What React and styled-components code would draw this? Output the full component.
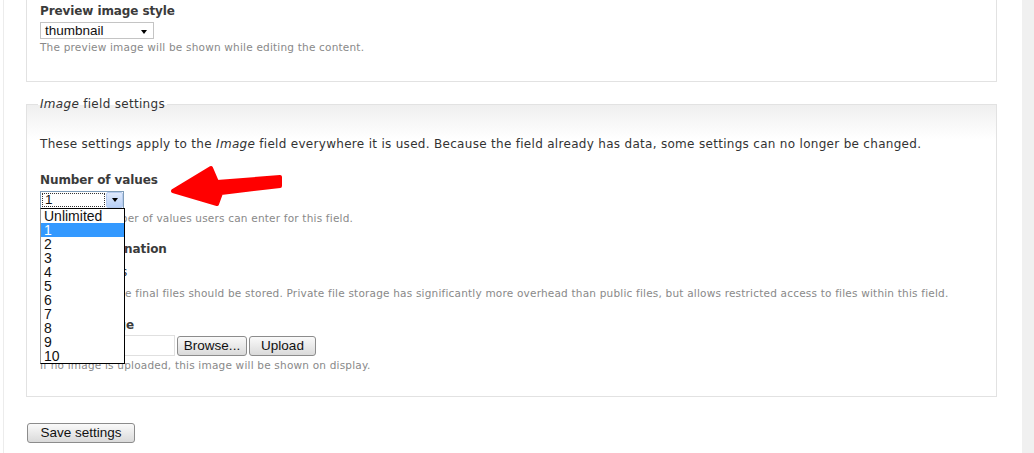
import React from 'react'
import styled, {createGlobalStyle} from 'styled-components'

const GlobalStyle = createGlobalStyle`
  html, body {
    margin: 0;
    padding: 0;
    background: #fff;
  }
  body {
    font-family: "DejaVu Sans", Verdana, sans-serif;
    font-size: 12px;
    letter-spacing: 0.3px;
    color: #333;
  }
`;

const options = ['Unlimited', '1', '2', '3', '4', '5', '6', '7', '8', '9', '10'];

const App = () => {
  return (
    <>
      <GlobalStyle/>
      <Page>
        <EdgeLine/>
        <Main>
          <TopSet>
            <Label>Preview image style</Label>
            <PlainSelect>
              thumbnail
              <SmallCaret/>
            </PlainSelect>
            <Description>The preview image will be shown while editing the content.</Description>
          </TopSet>

          <FieldSet>
            <Legend><em>Image</em> field settings</Legend>
            <Intro>
              These settings apply to the <em>Image</em> field everywhere it is used. Because the field already has data, some settings can no longer be changed.
            </Intro>

            <Label $top={20}>Number of values</Label>
            <SelectWrap>
              <FocusSelect>
                <FocusText>1</FocusText>
                <BlueButton><SmallCaret/></BlueButton>
              </FocusSelect>
              <OptionList>
                {options.map(opt => (
                  <OptionItem key={opt} $active={opt === '1'}>{opt}</OptionItem>
                ))}
              </OptionList>
            </SelectWrap>
            <Description $top={2}>Maximum number of values users can enter for this field.</Description>

            <Label $top={16}>Upload destination</Label>
            <RadioRow>
              <input type="radio" checked readOnly/>
              Public files
            </RadioRow>
            <Description $top={6}>
              Select where the final files should be stored. Private file storage has significantly more overhead than public files, but allows restricted access to files within this field.
            </Description>

            <Label $top={17}>Default image</Label>
            <FileRow>
              <FileBox/>
              <Button $width={70}>Browse...</Button>
              <Button $width={67}>Upload</Button>
            </FileRow>
            <Description $top={2}>If no image is uploaded, this image will be shown on display.</Description>
          </FieldSet>

          <SaveButton>Save settings</SaveButton>
        </Main>
        <SideBar/>

        <Arrow width="130" height="60" viewBox="0 0 130 60">
          <polygon
            points="13,36 51,13 57,27 120,22 120,31 61,38 57,49"
            fill="#ff0000"
            stroke="#ff0000"
            strokeWidth="4"
            strokeLinejoin="round"
          />
        </Arrow>
      </Page>
    </>
  )
}

export default App;

const Page = styled.div`
  position: relative;
  display: flex;
  width: 1034px;
  height: 453px;
  overflow: hidden;
`;

const EdgeLine = styled.div`
  width: 3px;
  border-right: 1px solid #ececec;
`;

const Main = styled.div`
  flex: 1;
  padding: 0 25px 0 22px;
`;

const SideBar = styled.div`
  width: 12px;
  background: #f0f0f0;
`;

const TopSet = styled.div`
  box-sizing: border-box;
  height: 82px;
  padding: 3px 13px 0;
  border: 1px solid #e2e2e2;
  border-top: none;
`;

const Label = styled.div`
  margin-top: ${p => p.$top || 0}px;
  font-weight: bold;
  line-height: 16px;
  letter-spacing: -0.1px;
  color: #3b3b3b;
`;

const Description = styled.div`
  margin-top: ${p => p.$top === undefined ? 1 : p.$top}px;
  font-size: 10.5px;
  line-height: 14px;
  letter-spacing: 0.2px;
  color: #898989;
`;

const controlFont = `
  font-family: "Liberation Sans", Arial, sans-serif;
  font-size: 13.5px;
  letter-spacing: 0;
  color: #111;
`;

const PlainSelect = styled.div`
  position: relative;
  box-sizing: border-box;
  width: 114px;
  height: 17px;
  margin-top: 3px;
  padding-left: 4px;
  border: 1px solid #c4c4c4;
  line-height: 15px;
  ${controlFont}

  & > span {
    position: absolute;
    right: 6px;
    top: 7px;
  }
`;

const SmallCaret = styled.span`
  display: inline-block;
  width: 0;
  height: 0;
  border-left: 3.5px solid transparent;
  border-right: 3.5px solid transparent;
  border-top: 4px solid #000;
`;

const FieldSet = styled.fieldset`
  margin: 14px 0 0;
  padding: 0 13px 24px;
  min-width: 0;
  border: 1px solid #e2e2e2;
  background: linear-gradient(#efefef 0px, #fff 34px);
`;

const Legend = styled.legend`
  margin-left: -2px;
  padding: 0 2px;
  line-height: 16px;
  color: #333;
`;

const Intro = styled.p`
  margin: 24px 0 0;
  line-height: 16px;
`;

const SelectWrap = styled.div`
  position: relative;
  width: 84px;
  margin-top: 3px;
`;

const FocusSelect = styled.div`
  display: flex;
  box-sizing: border-box;
  width: 84px;
  height: 18px;
  border: 1px solid #7f9db9;
  background: #fff;
`;

const FocusText = styled.div`
  flex: 1;
  margin: 1px;
  padding-left: 2px;
  border: 1px dotted #333;
  line-height: 12px;
  ${controlFont}
`;

const BlueButton = styled.div`
  display: flex;
  align-items: center;
  justify-content: center;
  width: 15px;
  border: 1px solid #b6cbee;
  border-radius: 2px;
  background: linear-gradient(#dfeafc, #b7cff6);
`;

const OptionList = styled.div`
  position: absolute;
  left: 0;
  top: 17px;
  z-index: 2;
  box-sizing: border-box;
  width: 85px;
  border: 1px solid #000;
  border-left-color: #9a9a9a;
  background: #fff;
`;

const OptionItem = styled.div`
  height: 14px;
  padding-left: 3px;
  line-height: 14px;
  ${controlFont}
  font-size: 14px;
  color: ${p => p.$active ? '#fff' : '#111'};
  background: ${p => p.$active ? '#3399ff' : 'transparent'};
`;

const RadioRow = styled.label`
  display: flex;
  align-items: center;
  gap: 7px;
  margin-top: 7px;
  line-height: 16px;

  input {
    margin: 0;
  }
`;

const FileRow = styled.div`
  display: flex;
  align-items: center;
  gap: 2px;
  height: 21px;
  margin-top: 2px;
`;

const FileBox = styled.div`
  box-sizing: border-box;
  width: 135px;
  height: 21px;
  border: 1px solid #e0e0e0;
  background: #fff;
`;

const Button = styled.button`
  box-sizing: border-box;
  width: ${p => p.$width}px;
  height: 20px;
  padding: 0;
  border: 1px solid #8c8c8c;
  border-radius: 3px;
  background: linear-gradient(#fafafa, #dadada);
  line-height: 16px;
  ${controlFont}
`;

const SaveButton = styled(Button)`
  display: block;
  width: 108px;
  margin: 26px 0 0 1px;
`;

const Arrow = styled.svg`
  position: absolute;
  left: 160px;
  top: 155px;
  z-index: 3;
`;
